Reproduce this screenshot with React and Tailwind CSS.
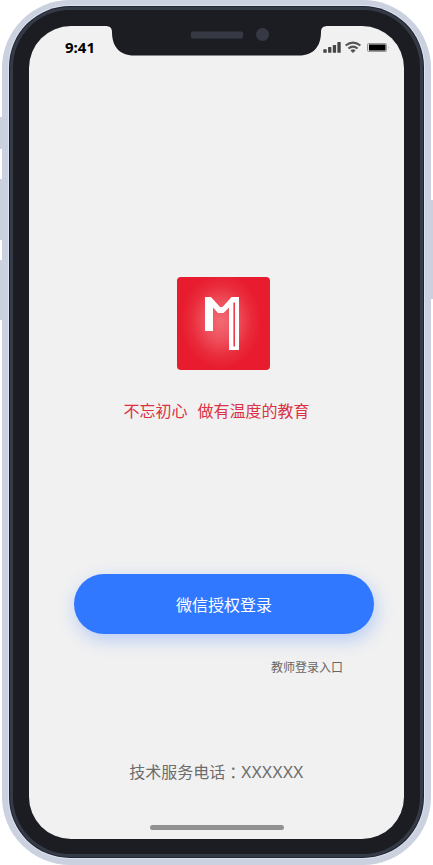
function Notch() {
  return (
    <svg className="absolute left-[76px] top-0" width="223" height="30" viewBox="0 0 223 30" aria-hidden="true">
      <path d="M0 0H223C218 0 216 2 216 6C216 20 209 29.5 194 29.5H29C14 29.5 7 20 7 6C7 2 5 0 0 0Z" fill="#1c1d22" />
      <rect x="86" y="5.5" width="52" height="7" rx="1.5" fill="#363844" />
      <circle cx="157.5" cy="8.5" r="6.5" fill="#363844" />
    </svg>
  );
}

function StatusIcons() {
  return (
    <svg width="68" height="14" viewBox="0 0 68 14" aria-hidden="true">
      <g fill="#444">
        <rect x="0.3" y="8.3" width="3.4" height="3.4" rx=".5" />
        <rect x="5.1" y="6" width="3.3" height="5.7" rx=".5" />
        <rect x="9.8" y="4" width="3.3" height="7.7" rx=".5" />
        <rect x="14.4" y="1" width="3.3" height="10.7" rx=".5" />
      </g>
      <g fill="none" stroke="#555" strokeWidth="2">
        <path d="M22.6 4.5Q30 -1.2 37.4 4.5" />
        <path d="M25.4 7.6Q30 3.6 34.6 7.6" />
      </g>
      <path d="M27.4 9.4Q30 7 32.6 9.4L30 12Z" fill="#555" />
      <rect x="44.5" y="2.5" width="19" height="8" rx="1" fill="#ddd" stroke="#999" />
      <rect x="46" y="3.5" width="16.5" height="6" fill="#000" />
      <path d="M65.5 5Q67 6.5 65.5 8Z" fill="#aaa" />
    </svg>
  );
}

function Logo() {
  return (
    <div className="ml-[14px] flex h-[93px] w-[93px] items-start rounded-[4px] bg-[#e81c2e] bg-[radial-gradient(ellipse_40px_48px_at_44px_44px,#f26b73_0%,#ef4f5c_40%,#e92b3b_75%,#e81c2e_100%)]">
      <svg width="93" height="93" viewBox="0 0 93 93" aria-hidden="true">
        <path d="M28 20H34L43 30H45.5L54.5 20H62V73H52V30.5L46.5 36H41L36 30.5V54H28Z" fill="#fff" />
        <path d="M57.2 25.5V69.5" stroke="#ed3b48" strokeWidth="1.6" />
      </svg>
    </div>
  );
}

export default function App() {
  return (
    <div className="relative h-[865px] w-[433px] overflow-hidden bg-white px-[2px] font-['Noto_Sans','Noto_Sans_CJK_SC',sans-serif]">
      <i className="absolute left-0 top-[117px] h-8 w-1 bg-[#cbd0df]" />
      <i className="absolute left-0 top-[179px] h-[61px] w-1 bg-[#cbd0df]" />
      <i className="absolute left-0 top-[260px] h-[60px] w-1 bg-[#cbd0df]" />
      <i className="absolute right-0 top-[200px] h-[99px] w-1 bg-[#cbd0df]" />
      <div className="relative h-full rounded-[68px] bg-[#cbd1df] px-[6px] pb-[6px] pt-[5px]">
        <div className="h-full rounded-[62px] bg-[#dce4f4] p-px">
          <div className="h-full rounded-[61px] bg-[#20242d] p-px">
            <div className="h-full rounded-[60px] bg-[#353a47] p-[3px]">
              <div className="h-full rounded-[57px] bg-[#1c1d22] px-4 pb-[15px] pt-4">
                <div className="relative h-[813px] w-[375px] overflow-hidden rounded-[42px] bg-[#f1f1f1]">
                  <Notch />
                  <div className="flex h-[44px] items-start justify-between pl-9 pr-[13px] pt-[15px]">
                    <span className="-mt-px font-['Noto_Sans'] text-[15px] font-bold leading-[14px] text-black">9:41</span>
                    <StatusIcons />
                  </div>
                  <main className="flex flex-col items-center pt-[207px]">
                    <Logo />
                    <p className="mt-[29px] flex gap-[10px] text-[16px] leading-6 text-[#dc3145]">
                      <span>不忘初心</span><span>做有温度的教育</span>
                    </p>
                    <button className="ml-[15px] mt-[151px] h-[60px] w-[300px] rounded-full bg-[#3078ff] pt-[2px] text-[16px] text-white shadow-[2px_6px_18px_rgba(48,120,255,0.3)]">微信授权登录</button>
                    <a className="mr-[61px] mt-[25px] self-end text-[12px] leading-[18px] text-[#666]">教师登录入口</a>
                    <p className="mt-[83px] flex text-[16px] leading-6 text-[#6c6c6c]">
                      <span>技术服务电话</span>
                      <span className="font-['Noto_Sans_CJK_TC',sans-serif]">：</span>
                      <span className="text-[17px] tracking-[0.45px]">XXXXXX</span>
                    </p>
                    <div className="mt-[41px] h-[5px] w-[134px] rounded-full bg-[#929292]" />
                  </main>
                </div>
              </div>
            </div>
          </div>
        </div>
      </div>
    </div>
  );
}
